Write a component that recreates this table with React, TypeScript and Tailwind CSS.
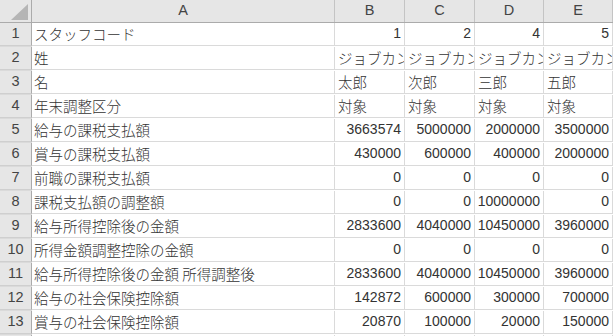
import React from "react";

const rows: [string, string[] | null][] = [
  ["スタッフコード", ["1", "2", "4", "5"]],
  ["姓", null],
  ["名", ["太郎", "次郎", "三郎", "五郎"]],
  ["年末調整区分", ["対象", "対象", "対象", "対象"]],
  ["給与の課税支払額", ["3663574", "5000000", "2000000", "3500000"]],
  ["賞与の課税支払額", ["430000", "600000", "400000", "2000000"]],
  ["前職の課税支払額", ["0", "0", "0", "0"]],
  ["課税支払額の調整額", ["0", "0", "10000000", "0"]],
  ["給与所得控除後の金額", ["2833600", "4040000", "10450000", "3960000"]],
  ["所得金額調整控除の金額", ["0", "0", "0", "0"]],
  ["給与所得控除後の金額 所得調整後", ["2833600", "4040000", "10450000", "3960000"]],
  ["給与の社会保険控除額", ["142872", "600000", "300000", "700000"]],
  ["賞与の社会保険控除額", ["20870", "100000", "20000", "150000"]],
];

const jp = { fontFamily: '"Noto Sans CJK JP", "Liberation Sans", sans-serif' };
const num = { fontFamily: '"Liberation Sans", "Noto Sans CJK JP", sans-serif' };

const gridCols = "grid grid-cols-[32px_303px_70px_70px_69px_69px_1fr]";

export default function App() {
  return (
    <div className="w-[613px] h-[336px] overflow-hidden bg-white text-[#333333]">
      {/* column header */}
      <div className={`${gridCols} h-[23px] bg-[#e6e6e6] border-b border-[#ababab]`}>
        <div className="relative border-r border-[#ababab]">
          <svg className="absolute left-[10px] top-[4px]" width="19" height="17" viewBox="0 0 19 17">
            <polygon points="18,0 18,16 1,16" fill="#b5b5b5" />
          </svg>
        </div>
        {["A", "B", "C", "D", "E", ""].map((c, i) => (
          <div
            key={i}
            className="flex items-center justify-center border-r border-[#c4c4c4] text-[14.5px] text-[#444]"
            style={num}
          >
            {c}
          </div>
        ))}
      </div>
      {rows.map(([label, vals], r) => (
        <div key={r} className={`${gridCols} h-[24px]`}>
          <div
            className="flex items-center justify-center bg-[#e6e6e6] border-r border-[#ababab] border-b border-b-[#cfcfcf] text-[14.5px] text-[#444]"
            style={num}
          >
            {r + 1}
          </div>
          <div
            className="flex items-center pl-[2px] border-r border-b border-[#dadada] text-[14.5px] font-light whitespace-nowrap overflow-hidden"
            style={jp}
          >
            {label}
          </div>
          {vals === null
            ? [0, 1, 2, 3].map((i) => (
                <div
                  key={i}
                  className="flex items-center pl-[3px] border-r border-b border-[#dadada] text-[14.5px] font-light whitespace-nowrap overflow-hidden"
                  style={jp}
                >
                  ジョブカン
                </div>
              ))
            : vals.map((v, i) => {
                const isNum = /^\d+$/.test(v);
                return isNum ? (
                  <div
                    key={i}
                    className="flex items-center justify-end pr-[3px] border-r border-b border-[#dadada] text-[14px] whitespace-nowrap overflow-hidden"
                    style={num}
                  >
                    {v}
                  </div>
                ) : (
                  <div
                    key={i}
                    className="flex items-center pl-[3px] border-r border-b border-[#dadada] text-[14.5px] font-light whitespace-nowrap overflow-hidden"
                    style={jp}
                  >
                    {v}
                  </div>
                );
              })}
          <div className="border-r border-b border-[#dadada]" />
          <div className="border-b border-[#dadada]" />
        </div>
      ))}
      <div className={`${gridCols} h-[24px]`}>
        <div className="bg-[#e6e6e6] border-r border-[#ababab]" />
        <div className="border-r border-[#dadada]" />
        <div className="border-r border-[#dadada]" />
        <div className="border-r border-[#dadada]" />
        <div className="border-r border-[#dadada]" />
        <div className="border-r border-[#dadada]" />
        <div />
      </div>
    </div>
  );
}
